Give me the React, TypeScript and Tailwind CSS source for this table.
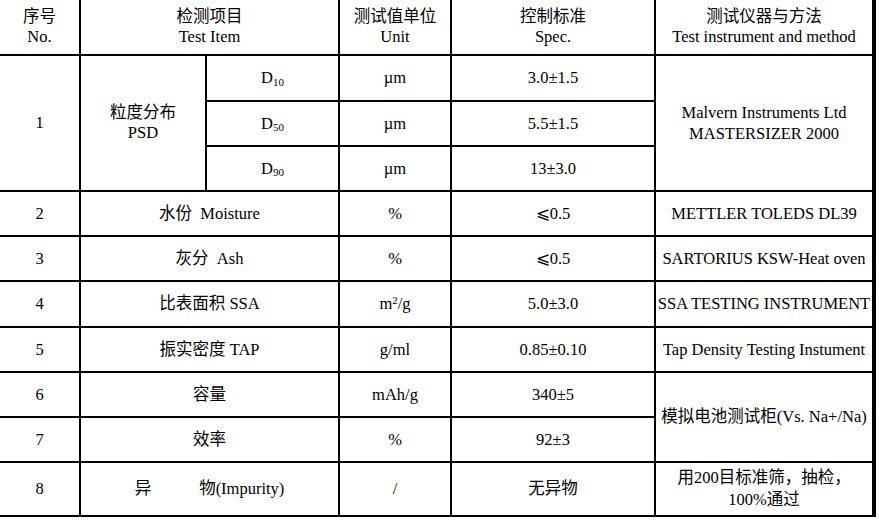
const serif = "font-['Liberation_Serif','Noto_Sans_CJK_SC',serif]";

function Cell({
  children,
  className = "",
}: {
  children: React.ReactNode;
  className?: string;
}) {
  return (
    <div
      className={`flex flex-col items-center justify-center bg-white text-center ${className}`}
    >
      {children}
    </div>
  );
}

function D({ sub }: { sub: string }) {
  return (
    <span>
      D<sub className="text-[11px] leading-none">{sub}</sub>
    </span>
  );
}

export default function App() {
  return (
    <div className={`bg-white ${serif} text-[16.5px] leading-[20px] text-black`}>
      <div className="grid w-fit grid-cols-[79px_124px_131px_110px_202px_216px] grid-rows-[54px_44px_43px_43px_43px_43px_44px_43px_43px_43px_52px] gap-[2px] bg-black pr-[4px] pb-[2px]">
        {/* header */}
        <Cell>
          <span>序号</span>
          <span>No.</span>
        </Cell>
        <Cell className="col-span-2">
          <span>检测项目</span>
          <span>Test Item</span>
        </Cell>
        <Cell>
          <span>测试值单位</span>
          <span>Unit</span>
        </Cell>
        <Cell>
          <span>控制标准</span>
          <span>Spec.</span>
        </Cell>
        <Cell>
          <span>测试仪器与方法</span>
          <span className="whitespace-nowrap">Test instrument and method</span>
        </Cell>

        {/* 1: PSD */}
        <Cell className="row-span-3">1</Cell>
        <Cell className="row-span-3">
          <span>粒度分布</span>
          <span>PSD</span>
        </Cell>
        <Cell>
          <D sub="10" />
        </Cell>
        <Cell>µm</Cell>
        <Cell>3.0±1.5</Cell>
        <Cell className="row-span-3">
          <span>Malvern Instruments Ltd</span>
          <span className="mt-[1px]">MASTERSIZER 2000</span>
        </Cell>
        <Cell>
          <D sub="50" />
        </Cell>
        <Cell>µm</Cell>
        <Cell>5.5±1.5</Cell>
        <Cell>
          <D sub="90" />
        </Cell>
        <Cell>µm</Cell>
        <Cell>13±3.0</Cell>

        {/* 2 */}
        <Cell>2</Cell>
        <Cell className="col-span-2 whitespace-pre">水份  Moisture</Cell>
        <Cell>%</Cell>
        <Cell>⩽0.5</Cell>
        <Cell className="whitespace-nowrap">METTLER TOLEDS DL39</Cell>

        {/* 3 */}
        <Cell>3</Cell>
        <Cell className="col-span-2 whitespace-pre">灰分  Ash</Cell>
        <Cell>%</Cell>
        <Cell>⩽0.5</Cell>
        <Cell className="whitespace-nowrap">SARTORIUS KSW-Heat oven</Cell>

        {/* 4 */}
        <Cell>4</Cell>
        <Cell className="col-span-2 whitespace-pre">比表面积 SSA</Cell>
        <Cell>
          <span>
            m<sup className="text-[11px]">2</sup>/g
          </span>
        </Cell>
        <Cell>5.0±3.0</Cell>
        <Cell className="whitespace-nowrap">SSA TESTING INSTRUMENT</Cell>

        {/* 5 */}
        <Cell>5</Cell>
        <Cell className="col-span-2">振实密度 TAP</Cell>
        <Cell>g/ml</Cell>
        <Cell>0.85±0.10</Cell>
        <Cell className="whitespace-nowrap">Tap Density Testing Instument</Cell>

        {/* 6, 7 */}
        <Cell>6</Cell>
        <Cell className="col-span-2">容量</Cell>
        <Cell>mAh/g</Cell>
        <Cell>340±5</Cell>
        <Cell className="row-span-2 whitespace-nowrap">模拟电池测试柜(Vs. Na+/Na)</Cell>
        <Cell>7</Cell>
        <Cell className="col-span-2">效率</Cell>
        <Cell>%</Cell>
        <Cell>92±3</Cell>

        {/* 8 */}
        <Cell>8</Cell>
        <Cell className="col-span-2">
          <span>
            异<span className="ml-[48px]">物(Impurity)</span>
          </span>
        </Cell>
        <Cell>/</Cell>
        <Cell>无异物</Cell>
        <Cell className="leading-[22px]">
          <span className="whitespace-nowrap">用200目标准筛，抽检，</span>
          <span>100%通过</span>
        </Cell>
      </div>
    </div>
  );
}
